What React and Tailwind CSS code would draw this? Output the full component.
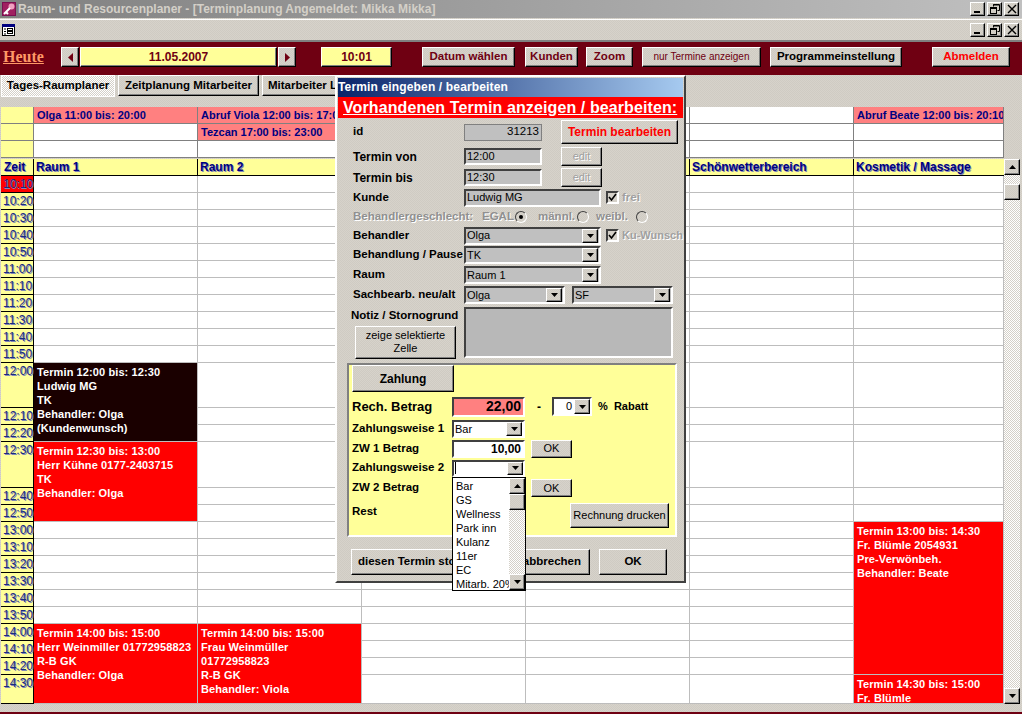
import React from "react";

const font = { fontFamily: '"Liberation Sans", Arial, sans-serif' };

// ---- small win9x bits ----
const raised =
  "border border-t-white border-l-white border-r-black border-b-black shadow-[inset_-1px_-1px_0_#808080]";
const sunken =
  "border-2 border-t-[#404040] border-l-[#404040] border-r-white border-b-white";
const dither = "bg-[repeating-conic-gradient(#d4d0c8_0_25%,#ffffff_0_50%)] bg-[length:2px_2px]";
const faceDither = "bg-[repeating-conic-gradient(#d7d3cb_0_25%,#cfcbc3_0_50%)] bg-[length:2px_2px]";
const disabledText = "text-[#a0a0a0] [text-shadow:1px_1px_0_#fff]";

const WinBtn = ({ className = "", children }) => (
  <button
    className={`flex items-center justify-center leading-none whitespace-nowrap ${faceDither} ${raised} ${className}`}
  >
    {children}
  </button>
);

const CaptionButtons = () => (
  <div className="flex gap-[2px] items-center">
    <WinBtn className="w-[15px] h-[14px]">
      <svg width="10" height="10" viewBox="0 0 10 10">
        <rect x="1" y="7" width="6" height="2" fill="#000" />
      </svg>
    </WinBtn>
    <WinBtn className="w-[15px] h-[14px]">
      <svg width="10" height="10" viewBox="0 0 10 10" fill="none" stroke="#000">
        <path d="M3.5 2.5V0.5H9.5V6.5H7.5" />
        <path d="M3 1H9" strokeWidth="1" />
        <rect x="0.5" y="3.5" width="6" height="6" />
        <path d="M0 4.5H7" />
      </svg>
    </WinBtn>
    <WinBtn className="w-[15px] h-[14px]">
      <svg width="10" height="10" viewBox="0 0 10 10" stroke="#000" strokeWidth="1.4">
        <path d="M1 1L9 9M9 1L1 9" />
      </svg>
    </WinBtn>
  </div>
);

const DownArrow = () => (
  <svg width="7" height="4" viewBox="0 0 7 4">
    <path d="M0 0H7L3.5 4Z" fill="#000" />
  </svg>
);

const UpArrow = () => (
  <svg width="7" height="4" viewBox="0 0 7 4">
    <path d="M3.5 0L7 4H0Z" fill="#000" />
  </svg>
);

const Combo = ({ value, className = "", bg = "bg-[#c0c0c0]" }) => (
  <div className={`flex items-center h-[18px] pl-[1px] pr-[1px] text-[11px] text-black shrink-0 ${sunken} ${bg} ${className}`}>
    <span className="flex-1 leading-none whitespace-nowrap overflow-hidden">{value}</span>
    <WinBtn className="w-[16px] h-[14px] shrink-0">
      <DownArrow />
    </WinBtn>
  </div>
);

const Field = ({ value, className = "" }) => (
  <div className={`flex items-center h-[17px] px-[1px] text-[11px] bg-[#c0c0c0] shrink-0 ${sunken} ${className}`}>
    {value}
  </div>
);

const Check = () => (
  <div className="w-[13px] h-[13px] border-2 border-t-[#404040] border-l-[#404040] border-r-white border-b-white bg-[#d4d0c8] flex items-center justify-center shrink-0">
    <svg width="9" height="9" viewBox="0 0 9 9" fill="none" stroke="#000" strokeWidth="1.6">
      <path d="M1 4L3.5 7L8 1" />
    </svg>
  </div>
);

const Radio = ({ on }) => (
  <div className="w-[12px] h-[12px] rounded-full border border-t-[#404040] border-l-[#404040] border-r-white border-b-white flex items-center justify-center shrink-0">
    {on && <div className="w-[4px] h-[4px] rounded-full bg-black" />}
  </div>
);

// ---- planner data ----
const times = [
  ["10:10", 17], ["10:20", 17], ["10:30", 17], ["10:40", 17], ["10:50", 17], ["11:00", 17],
  ["11:10", 17], ["11:20", 17], ["11:30", 17], ["11:40", 17], ["11:50", 17],
  ["12:00", 45], ["12:10", 17], ["12:20", 17],
  ["12:30", 46], ["12:40", 17], ["12:50", 17],
  ["13:00", 17], ["13:10", 17], ["13:20", 17], ["13:30", 17], ["13:40", 17], ["13:50", 17],
  ["14:00", 17], ["14:10", 17], ["14:20", 17], ["14:30", 29],
];

const events = [
  { col: 2, start: 11, n: 3, span: "row-span-3", bg: "bg-[#1a0000]", lines: ["Termin 12:00 bis: 12:30", "Ludwig MG", "TK", "Behandler: Olga", "(Kundenwunsch)"] },
  { col: 2, start: 14, n: 3, span: "row-span-3", bg: "bg-[#ff0000]", lines: ["Termin 12:30 bis: 13:00", "Herr Kühne 0177-2403715", "TK", "Behandler: Olga"] },
  { col: 2, start: 23, n: 4, span: "row-span-4", bg: "bg-[#ff0000]", lines: ["Termin 14:00 bis: 15:00", "Herr Weinmiller 01772958823", "R-B GK", "Behandler: Olga"] },
  { col: 3, start: 23, n: 4, span: "row-span-4", bg: "bg-[#ff0000]", lines: ["Termin 14:00 bis: 15:00", "Frau Weinmüller", "01772958823", "R-B GK", "Behandler: Viola"] },
  { col: 7, start: 17, n: 9, span: "row-span-9", bg: "bg-[#ff0000]", lines: ["Termin 13:00 bis: 14:30", "Fr. Blümle 2054931", "Pre-Verwönbeh.", "Behandler: Beate"] },
  { col: 7, start: 26, n: 1, span: "row-span-1", bg: "bg-[#ff0000]", lines: ["Termin 14:30 bis: 15:00", "Fr. Blümle"] },
];

const HEADS = ["Raum 1", "Raum 2", "", "", "Schönwetterbereich", "Kosmetik / Massage"];

const covered = (col, i) => events.some((e) => e.col === col && i >= e.start && i < e.start + e.n);

const shadowText = "[text-shadow:1px_1px_0_#7f86b8]";
const shiftCls =
  "bg-[#ff8080] border-b border-r border-[#808080] pl-[3px] text-[11px] font-bold text-[#000080] leading-[16px] whitespace-nowrap overflow-hidden";

const Planner = () => {
  const cols = [2, 3, 4, 5, 6, 7];
  return (
    <div className="flex items-start pl-[1px] pt-[11px]">
      <div className="w-[1003px]">
        {/* top rows with shifts */}
        <div className="grid grid-cols-[33px_164px_164px_164px_164px_164px_150px] grid-rows-[17px_17px_17px]">
          {[0, 1, 2].map((r) => (
            <div key={r} className="bg-[#ffff99] border-b border-r border-[#808080]" />
          ))}
          <div className={`col-start-2 row-start-1 ${shiftCls}`}>Olga 11:00 bis: 20:00</div>
          <div className={`col-start-3 row-start-1 ${shiftCls}`}>Abruf Viola 12:00 bis: 17:00</div>
          <div className={`col-start-3 row-start-2 ${shiftCls}`}>Tezcan 17:00 bis: 23:00</div>
          <div className={`col-start-7 row-start-1 ${shiftCls}`}>Abruf Beate 12:00 bis: 20:10</div>
          {[
            [2, 2], [2, 3], [3, 3], [4, 1], [4, 2], [4, 3], [5, 1], [5, 2], [5, 3], [6, 1], [6, 2], [6, 3], [7, 2], [7, 3],
          ].map(([c, r]) => (
            <div
              key={`${c}-${r}`}
              style={{ gridColumnStart: c, gridRowStart: r }}
              className="bg-white border-b border-r border-[#808080]"
            />
          ))}
        </div>

        {/* column heads */}
        <div className="grid grid-cols-[33px_164px_164px_164px_164px_164px_150px] h-[17px] mt-[1px]">
          <div className="bg-[#ffff99] border-b-2 border-r border-black pl-[3px] text-[12px] font-bold text-[#000080] leading-[16px] [text-shadow:1px_1px_0_#7f86b8]">
            Zeit
          </div>
          {HEADS.map((h, i) => (
            <div
              key={i}
              className={`bg-[#ffff99] border-b-2 border-black pl-[2px] text-[12px] font-bold text-[#000080] leading-[16px] whitespace-nowrap ${shadowText} ${i < 5 ? "border-r" : ""}`}
            >
              {h}
            </div>
          ))}
        </div>

        {/* time slots */}
        <div
          className="grid grid-cols-[33px_164px_164px_164px_164px_164px_150px] h-[528px] overflow-hidden"
          style={{ gridTemplateRows: times.map((t) => `${t[1]}px`).join(" ") }}
        >
          {times.map(([t], i) => (
            <div
              key={t}
              style={{ gridColumnStart: 1, gridRowStart: i + 1 }}
              className={`border-b border-r border-black pl-[2px] pt-[1px] text-[12px] leading-[14px] text-[#1a2a80] ${shadowText} ${t === "10:10" ? "bg-[#ff0000]" : "bg-[#ffff99]"}`}
            >
              {t}
            </div>
          ))}
          {times.map(([t], i) =>
            cols.map((c) =>
              covered(c, i) ? null : (
                <div
                  key={`${t}-${c}`}
                  style={{ gridColumnStart: c, gridRowStart: i + 1 }}
                  className="bg-white border-b border-r border-[#bdbdbd]"
                />
              )
            )
          )}
          {events.map((e) => (
            <div
              key={`${e.col}-${e.start}`}
              style={{ gridColumnStart: e.col, gridRowStart: e.start + 1 }}
              className={`${e.span} ${e.bg} border-b border-r border-[#bdbdbd] pl-[3px] pt-[2px] text-[11px] font-bold text-white leading-[14px] tracking-[0.1px] whitespace-nowrap overflow-hidden`}
            >
              {e.lines.map((l) => (
                <div key={l}>{l}</div>
              ))}
            </div>
          ))}
        </div>
      </div>

      {/* scrollbar */}
      <div className={`w-[16px] h-[545px] mt-[52px] flex flex-col ${dither}`}>
        <WinBtn className="w-[16px] h-[16px] shrink-0">
          <UpArrow />
        </WinBtn>
        <WinBtn className="w-[16px] h-[16px] shrink-0 mt-[9px]" />
        <div className="flex-1" />
        <WinBtn className="w-[16px] h-[16px] shrink-0">
          <DownArrow />
        </WinBtn>
      </div>
    </div>
  );
};

const labelCls = "text-[11.5px] font-bold text-black leading-none whitespace-nowrap shrink-0";

const Dialog = () => (
  <div className={`absolute left-[335px] top-[75px] w-[351px] h-[508px] border-2 border-t-white border-l-white border-r-[#404040] border-b-[#404040] p-[1px] ${faceDither}`}>
    <div className="h-[19px] bg-[linear-gradient(90deg,#0a246a,#a6caf0)] text-white text-[12px] font-bold leading-[19px] tracking-[0.15px]">
      Termin eingeben / bearbeiten
    </div>
    <div className="h-[21px] bg-[#ff0000] text-white text-[16px] font-bold leading-[21px] pl-[5px] whitespace-nowrap underline tracking-[0.1px]">
      Vorhandenen Termin anzeigen / bearbeiten:
    </div>

    <div className="flex flex-col pl-[14px] pt-[2px] pr-[2px]">
      <div className="flex items-center h-[24px]">
        <span className={`${labelCls} w-[112px] pl-[1px]`}>id</span>
        <div className="w-[78px] h-[17px] flex items-center justify-end pr-[2px] text-[11.5px] bg-[#c0c0c0] border border-[#808080] shrink-0">31213</div>
        <WinBtn className="w-[117px] h-[24px] ml-[19px] text-[12px] font-bold text-[#ff0000]">Termin bearbeiten</WinBtn>
      </div>
      <div className="flex items-center h-[21px] mt-[2px]">
        <span className={`${labelCls} !text-[12px] w-[112px] pl-[1px]`}>Termin von</span>
        <Field value="12:00" className="w-[78px]" />
        <WinBtn className={`w-[41px] h-[19px] ml-[19px] text-[11px] ${disabledText}`}>edit</WinBtn>
      </div>
      <div className="flex items-center h-[21px]">
        <span className={`${labelCls} !text-[12px] w-[112px] pl-[1px]`}>Termin bis</span>
        <Field value="12:30" className="w-[78px]" />
        <WinBtn className={`w-[41px] h-[19px] ml-[19px] text-[11px] ${disabledText}`}>edit</WinBtn>
      </div>
      <div className="flex items-center h-[19px]">
        <span className={`${labelCls} w-[112px] pl-[1px]`}>Kunde</span>
        <Field value="Ludwig MG" className="w-[137px] !h-[18px]" />
        <div className="ml-[5px]"><Check /></div>
        <span className={`ml-[3px] text-[11.5px] font-bold ${disabledText}`}>frei</span>
      </div>
      <div className="flex items-center h-[19px] pl-[1px] text-[11.5px] font-bold text-[#909090] [text-shadow:1px_1px_0_#fff] whitespace-nowrap">
        <span className="w-[129px] shrink-0">Behandlergeschlecht:</span>
        <span className="w-[33px] shrink-0">EGAL</span>
        <Radio on />
        <span className="w-[39px] ml-[11px] shrink-0">männl.</span>
        <Radio />
        <span className="w-[40px] ml-[7px] shrink-0">weibl.</span>
        <Radio />
      </div>
      <div className="flex items-center h-[19px]">
        <span className={`${labelCls} w-[112px] pl-[1px]`}>Behandler</span>
        <Combo value="Olga" className="w-[137px]" />
        <div className="ml-[5px]"><Check /></div>
        <span className={`ml-[3px] text-[11px] font-bold whitespace-nowrap ${disabledText}`}>Ku-Wunsch</span>
      </div>
      <div className="flex items-center h-[20px]">
        <span className={`${labelCls} w-[112px] pl-[1px]`}>Behandlung / Pause</span>
        <Combo value="TK" className="w-[137px]" />
      </div>
      <div className="flex items-center h-[20px]">
        <span className={`${labelCls} w-[112px] pl-[1px]`}>Raum</span>
        <Combo value="Raum 1" className="w-[137px]" />
      </div>
      <div className="flex items-center h-[20px]">
        <span className={`${labelCls} w-[112px] pl-[1px]`}>Sachbearb. neu/alt</span>
        <Combo value="Olga" className="w-[101px]" />
        <Combo value="SF" className="w-[101px] ml-[7px]" />
      </div>
      <div className="flex h-[53px] mt-[2px]">
        <div className="w-[112px] flex flex-col shrink-0">
          <span className={`${labelCls} -ml-[1px] mt-[3px]`}>Notiz / Stornogrund</span>
          <WinBtn className="w-[101px] h-[33px] mt-[4px] ml-[3px] text-[11px] !whitespace-normal !leading-[13px] text-center px-[8px]">
            zeige selektierte Zelle
          </WinBtn>
        </div>
        <div className={`w-[209px] h-[51px] bg-[#b8b8b8] ${sunken}`} />
      </div>
    </div>

    {/* Zahlung panel */}
    <div className="relative ml-[9px] mt-[3px] w-[330px] h-[174px] bg-[#ffff99] border-2 border-t-[#808080] border-l-[#808080] border-r-white border-b-white">
      <div className="pl-[3px] flex flex-col">
        <WinBtn className="w-[102px] h-[27px] text-[12px] font-bold">Zahlung</WinBtn>
        <div className="flex items-center h-[21px] mt-[4px]">
          <span className="w-[100px] shrink-0 text-[13px] font-bold leading-none whitespace-nowrap">Rech. Betrag</span>
          <div className={`w-[73px] h-[20px] flex items-center justify-end pr-[2px] text-[14px] font-bold bg-[#ff8080] ${sunken}`}>22,00</div>
          <span className="ml-[12px] w-[4px] text-[12px] font-bold">-</span>
          <div className={`ml-[11px] w-[40px] h-[19px] flex items-center justify-end bg-white text-[11px] ${sunken}`}>
            <span className="pr-[2px]">0</span>
            <WinBtn className="w-[16px] h-[15px] shrink-0"><DownArrow /></WinBtn>
          </div>
          <span className="ml-[6px] text-[11px] font-bold whitespace-nowrap">%&nbsp; Rabatt</span>
        </div>
        <div className="flex items-center h-[20px] mt-[2px]">
          <span className={`${labelCls} w-[100px]`}>Zahlungsweise 1</span>
          <Combo value="Bar" bg="bg-white" className="w-[73px]" />
        </div>
        <div className="flex items-center h-[19px]">
          <span className={`${labelCls} w-[100px]`}>ZW 1 Betrag</span>
          <div className={`w-[73px] h-[18px] flex items-center justify-end pr-[2px] text-[12px] font-bold bg-white ${sunken}`}>10,00</div>
          <WinBtn className="w-[41px] h-[18px] ml-[6px] text-[11px]">OK</WinBtn>
        </div>
        <div className="flex items-center h-[20px]">
          <span className={`${labelCls} w-[100px]`}>Zahlungsweise 2</span>
          <div className={`w-[73px] h-[17px] flex items-center bg-white ${sunken}`}>
            <span className="w-[1px] h-[12px] bg-black ml-[1px]" />
            <WinBtn className="w-[16px] h-[13px] ml-auto"><DownArrow /></WinBtn>
          </div>
        </div>
        <div className="flex items-center h-[20px]">
          <span className={`${labelCls} w-[173px]`}>ZW 2 Betrag</span>
          <WinBtn className="w-[41px] h-[18px] ml-[6px] text-[11px]">OK</WinBtn>
        </div>
        <div className="flex items-start h-[32px] pt-[5px]">
          <span className={`${labelCls} w-[218px] mt-[3px]`}>Rest</span>
          <WinBtn className="w-[99px] h-[25px] text-[11px]">Rechnung drucken</WinBtn>
        </div>
      </div>
    </div>

    <div className="flex mt-[12px] ml-[13px] text-[11.5px] font-bold">
      <WinBtn className="w-[169px] h-[26px] !justify-start pl-[6px] overflow-hidden">diesen Termin stornieren</WinBtn>
      <WinBtn className="w-[70px] h-[26px] !justify-end pr-[8px]">abbrechen</WinBtn>
      <WinBtn className="w-[68px] h-[26px] ml-[9px]">OK</WinBtn>
    </div>

    {/* open combo list */}
    <div className="absolute left-[115px] top-[400px] w-[74px] h-[114px] bg-white border border-black flex text-[11px] leading-[14px] overflow-hidden">
      <div className="flex-1 pl-[3px] pt-[1px] overflow-hidden whitespace-nowrap">
        {["Bar", "GS", "Wellness", "Park inn", "Kulanz", "11er", "EC", "Mitarb. 20%"].map((o) => (
          <div key={o}>{o}</div>
        ))}
      </div>
      <div className={`w-[16px] shrink-0 flex flex-col ${dither}`}>
        <WinBtn className="w-[16px] h-[16px] shrink-0"><UpArrow /></WinBtn>
        <WinBtn className="w-[16px] h-[16px] shrink-0" />
        <div className="flex-1" />
        <WinBtn className="w-[16px] h-[16px] shrink-0"><DownArrow /></WinBtn>
      </div>
    </div>
  </div>
);

export default function App() {
  return (
    <div style={font} className={`relative w-[1022px] h-[714px] overflow-hidden text-black ${faceDither}`}>
      {/* app title bar */}
      <div className="h-[18px] flex items-center bg-[linear-gradient(90deg,#808080,#c0c0c0)] pr-[3px]">
        <svg className="ml-[2px]" width="14" height="14" viewBox="0 0 14 14">
          <rect width="14" height="14" fill="#7a1050" />
          <rect x="1" y="1" width="12" height="12" fill="#a02060" />
          <circle cx="9.5" cy="4.5" r="3" fill="#f0a0c0" />
          <path d="M8 6L2 12M4 10L6 12" stroke="#fff" strokeWidth="2" />
        </svg>
        <span className="ml-[2px] text-[12px] font-bold text-[#d4d0c8]">
          Raum- und Resourcenplaner - [Terminplanung Angemeldet: Mikka Mikka]
        </span>
        <div className="ml-auto"><CaptionButtons /></div>
      </div>
      {/* mdi bar */}
      <div className="h-[23px] mt-[1px] border-t border-white flex items-center pl-[2px] pr-[3px] border-b-2 border-b-[#808080]">
        <svg width="13" height="12" viewBox="0 0 13 12">
          <rect x="0.5" y="0.5" width="12" height="11" fill="#fff" stroke="#000" />
          <rect x="0" y="0" width="13" height="3" fill="#000080" />
          <path d="M2 5H4M2 7.5H4M2 10H4" stroke="#000" />
          <rect x="5.5" y="4.5" width="5" height="2" fill="none" stroke="#000" />
          <rect x="5.5" y="7.5" width="5" height="2" fill="none" stroke="#000" />
        </svg>
        <div className="ml-auto"><CaptionButtons /></div>
      </div>

      {/* maroon toolbar */}
      <div className="h-[33px] bg-[#6f0012] flex items-start pt-[5px] pl-[3px] text-[#6f0012] text-[11.5px] font-bold">
        <a className="w-[58px] text-[16px] leading-[20px] text-[#ff9966] underline" style={{ fontFamily: '"Liberation Serif", serif' }}>Heute</a>
        <WinBtn className="w-[18px] h-[20px]">
          <svg width="5" height="9" viewBox="0 0 5 9"><path d="M5 0V9L0 4.5Z" fill="#6f0012" /></svg>
        </WinBtn>
        <div className={`w-[197px] h-[20px] ml-[1px] flex items-center justify-center bg-[#ffff99] text-[12px] ${raised}`}>11.05.2007</div>
        <WinBtn className="w-[18px] h-[20px] ml-[1px]">
          <svg width="5" height="9" viewBox="0 0 5 9"><path d="M0 0V9L5 4.5Z" fill="#6f0012" /></svg>
        </WinBtn>
        <div className={`w-[71px] h-[20px] ml-[25px] flex items-center justify-center bg-[#ffff99] text-[12px] ${raised}`}>10:01</div>
        <WinBtn className="w-[93px] h-[20px] ml-[30px]">Datum wählen</WinBtn>
        <WinBtn className="w-[53px] h-[20px] ml-[10px]">Kunden</WinBtn>
        <WinBtn className="w-[47px] h-[20px] ml-[8px]">Zoom</WinBtn>
        <WinBtn className="w-[119px] h-[20px] ml-[9px] text-[10px] !font-normal">nur Termine anzeigen</WinBtn>
        <WinBtn className="w-[132px] h-[20px] ml-[9px] text-black">Programmeinstellung</WinBtn>
        <WinBtn className="w-[78px] h-[20px] ml-[30px] text-[#ff0000]">Abmelden</WinBtn>
      </div>

      {/* tabs */}
      <div className="h-[21px] flex items-start pl-[1px] text-[11.5px] font-bold">
        <div className={`w-[114px] h-[22px] flex items-center justify-center border border-white ${dither}`}>Tages-Raumplaner</div>
        <WinBtn className="w-[141px] h-[21px] ml-[3px]">Zeitplanung Mitarbeiter</WinBtn>
        <WinBtn className="w-[100px] h-[21px] ml-[3px] !justify-start pl-[5px] overflow-hidden">Mitarbeiter Liste</WinBtn>
      </div>

      <Planner />
      <div className="mt-[8px] h-[2px] bg-[#6f0012]" />
      <Dialog />
    </div>
  );
}
